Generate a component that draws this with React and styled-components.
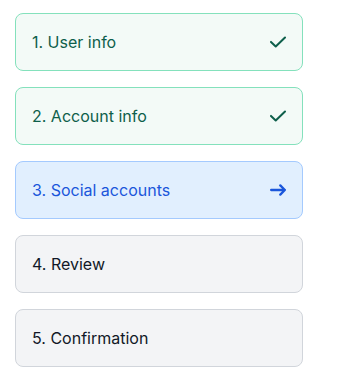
import React from 'react'
import styled, { createGlobalStyle } from 'styled-components';

const GlobalStyle = createGlobalStyle`
  body {
    margin: 0;
    background: #ffffff;
    font-family: Inter, "Noto Sans", sans-serif;
  }
`;

const tones = {
  done: { color: '#0E5F4B', bg: '#F3FAF7', border: '#84E1BC' },
  active: { color: '#1A56DB', bg: '#E1EFFE', border: '#A4CAFE' },
  todo: { color: '#111827', bg: '#F3F4F6', border: '#D1D5DB' },
};

const Steps = styled.ol`
  list-style: none;
  margin: 0;
  padding: 13px 0 0 15px;
  width: 288px;
  display: flex;
  flex-direction: column;
  gap: 16px;
`;

const Step = styled.li`
  box-sizing: border-box;
  width: 100%;
  padding: 16px;
  border: 1px solid ${p => tones[p.$tone].border};
  border-radius: 8px;
  background: ${p => tones[p.$tone].bg};
  color: ${p => tones[p.$tone].color};
`;

const Row = styled.div`
  display: flex;
  align-items: center;
  justify-content: space-between;
  height: 24px;
`;

const Title = styled.h3`
  margin: 0;
  font-size: 16px;
  line-height: 24px;
  font-weight: 400;
`;

const Check = () => (
  <svg width="16" height="16" viewBox="0 0 16 12" fill="none">
    <path d="M1 5.917 5.724 10.5 15 1.5" stroke="currentColor" strokeWidth="2" strokeLinecap="round" strokeLinejoin="round" />
  </svg>
);

const Arrow = () => (
  <svg width="16" height="16" viewBox="0 0 14 10" fill="none">
    <path d="M1 5h12m0 0L9 1m4 4L9 9" stroke="currentColor" strokeWidth="2" strokeLinecap="round" strokeLinejoin="round" />
  </svg>
);

const steps = [
  { title: '1. User info', tone: 'done' },
  { title: '2. Account info', tone: 'done' },
  { title: '3. Social accounts', tone: 'active' },
  { title: '4. Review', tone: 'todo' },
  { title: '5. Confirmation', tone: 'todo' },
];

const App = () => {
  return (
    <>
      <GlobalStyle />
      <Steps>
        {steps.map(s => (
          <Step key={s.title} $tone={s.tone}>
            <Row>
              <Title>{s.title}</Title>
              {s.tone === 'done' && <Check />}
              {s.tone === 'active' && <Arrow />}
            </Row>
          </Step>
        ))}
      </Steps>
    </>
  )
}

export default App
